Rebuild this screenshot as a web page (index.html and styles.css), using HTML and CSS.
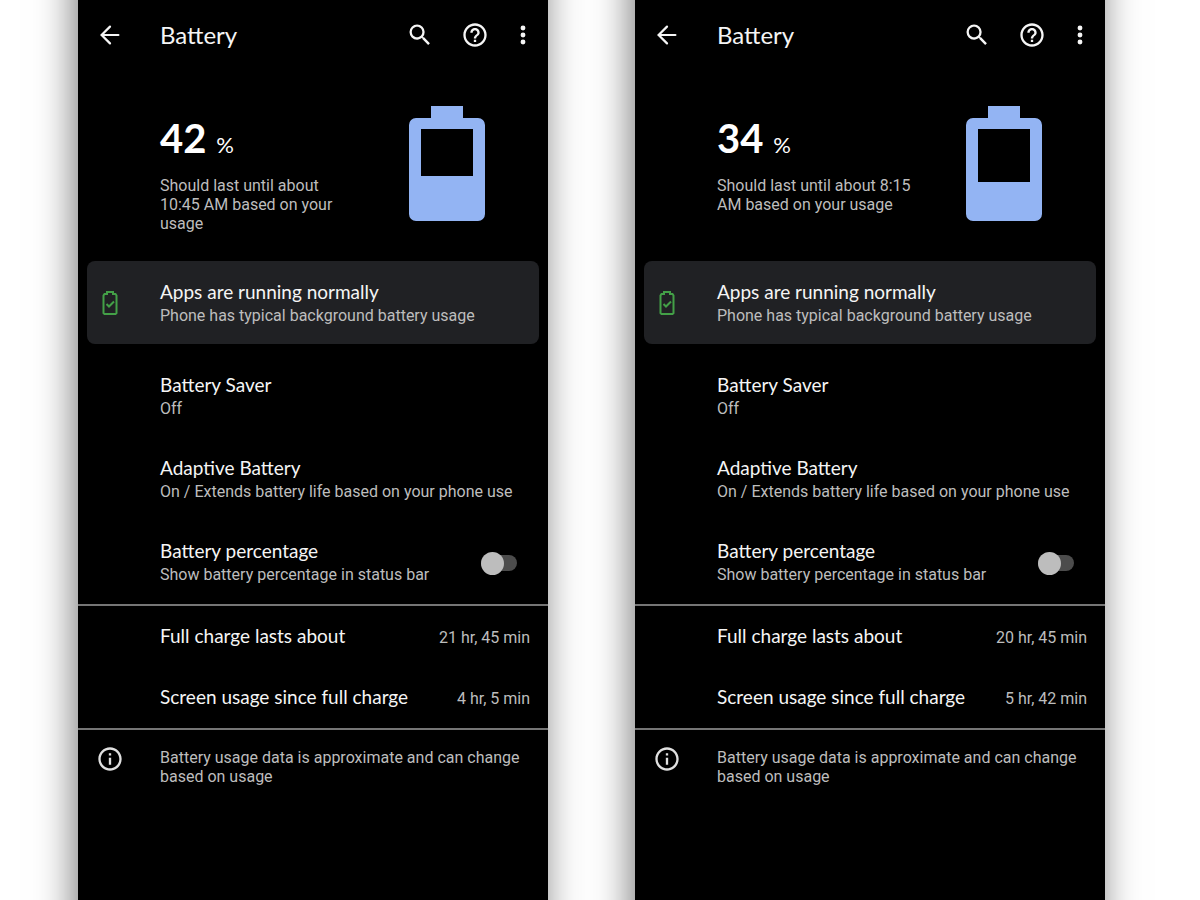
FILE: index.html
```html
<!DOCTYPE html>
<html lang="en">
<head>
<meta charset="utf-8">
<meta name="viewport" content="width=device-width, initial-scale=1">
<title>Battery</title>
<link rel="stylesheet" href="styles.css">
</head>

<body>
<svg class="sprite" aria-hidden="true">
  <symbol id="i-back" viewBox="0 0 24 24"><path d="M19.2 12H5M12 4.8L4.8 12l7.2 7.2" fill="none" stroke="currentColor" stroke-width="1.9" stroke-linecap="round"/></symbol>
  <symbol id="i-search" viewBox="0 0 24 24"><path d="M15.5 14h-.79l-.28-.27A6.47 6.47 0 0 0 16 9.5 6.5 6.5 0 1 0 9.5 16c1.61 0 3.09-.59 4.23-1.57l.27.28v.79l5 4.99L20.49 19l-4.99-5zm-6 0C7.01 14 5 11.99 5 9.5S7.01 5 9.5 5 14 7.01 14 9.5 11.99 14 9.5 14z"/></symbol>
  <symbol id="i-help" viewBox="0 0 24 24"><path d="M11 18h2v-2h-2v2zm1-16C6.48 2 2 6.48 2 12s4.48 10 10 10 10-4.48 10-10S17.52 2 12 2zm0 18c-4.41 0-8-3.59-8-8s3.59-8 8-8 8 3.59 8 8-3.59 8-8 8zm0-14c-2.21 0-4 1.79-4 4h2c0-1.1.9-2 2-2s2 .9 2 2c0 2-3 1.75-3 5h2c0-2.25 3-2.5 3-5 0-2.21-1.79-4-4-4z"/></symbol>
  <symbol id="i-more" viewBox="0 0 24 24"><circle cx="12" cy="6" r="2.1"/><circle cx="12" cy="12" r="2.1"/><circle cx="12" cy="18" r="2.1"/></symbol>
  <symbol id="i-info" viewBox="0 0 24 24"><path d="M11 7h2v2h-2zm0 4h2v6h-2zm1-9C6.48 2 2 6.48 2 12s4.48 10 10 10 10-4.48 10-10S17.52 2 12 2zm0 18c-4.41 0-8-3.59-8-8s3.59-8 8-8 8 3.59 8 8-3.59 8-8 8z"/></symbol>
  <symbol id="i-ok" viewBox="0 0 16 26"><path d="M5 4V2h6v2h2.500L14.500 5.500V23L13.500 24H2.500L1.500 23V5.500L2.500 4zM4.500 14l2.500 2.500 5-5" fill="none" stroke="currentColor" stroke-width="2"/></symbol>
</svg>

<main class="screens">
  <section class="phone">
    <header class="bar">
      <button type="button" class="icon-btn" aria-label="Back"><svg><use href="#i-back"/></svg></button>
      <h1>Battery</h1>
      <button type="button" class="icon-btn" aria-label="Search"><svg><use href="#i-search"/></svg></button>
      <button type="button" class="icon-btn help" aria-label="Help"><svg><use href="#i-help"/></svg></button>
      <button type="button" class="icon-btn" aria-label="More options"><svg><use href="#i-more"/></svg></button>
    </header>

    <div class="level">
      <div class="level-text">
        <p class="percent">42 <small>%</small></p>
        <p class="note">Should last until about 10:45 AM based on your usage</p>
      </div>
      <svg class="cell" viewBox="0 0 76 115"><path fill-rule="evenodd" d="M22 0H54V12H69a7 7 0 0 1 7 7V108a7 7 0 0 1-7 7H7a7 7 0 0 1-7-7V19a7 7 0 0 1 7-7H22zM12 23V70H64V23z"/></svg>
    </div>

    <div class="card">
      <svg class="ok"><use href="#i-ok"/></svg>
      <div>
        <h2>Apps are running normally</h2>
        <p>Phone has typical background battery usage</p>
      </div>
    </div>

    <a class="row" href="#saver">
      <h2>Battery Saver</h2>
      <p>Off</p>
    </a>
    <a class="row" href="#adaptive">
      <h2>Adaptive Battery</h2>
      <p>On / Extends battery life based on your phone use</p>
    </a>
    <div class="row switch-row">
      <label for="pct1">
        <span class="title">Battery percentage</span>
        <span class="sub">Show battery percentage in status bar</span>
      </label>
      <input class="switch" type="checkbox" role="switch" id="pct1">
    </div>

    <dl class="stats">
      <div><dt>Full charge lasts about</dt><dd>21 hr, 45 min</dd></div>
      <div><dt>Screen usage since full charge</dt><dd>4 hr, 5 min</dd></div>
    </dl>

    <footer class="foot">
      <svg><use href="#i-info"/></svg>
      <p>Battery usage data is approximate and can change based on usage</p>
    </footer>
  </section>

  <section class="phone">
    <header class="bar">
      <button type="button" class="icon-btn" aria-label="Back"><svg><use href="#i-back"/></svg></button>
      <h1>Battery</h1>
      <button type="button" class="icon-btn" aria-label="Search"><svg><use href="#i-search"/></svg></button>
      <button type="button" class="icon-btn help" aria-label="Help"><svg><use href="#i-help"/></svg></button>
      <button type="button" class="icon-btn" aria-label="More options"><svg><use href="#i-more"/></svg></button>
    </header>

    <div class="level">
      <div class="level-text">
        <p class="percent">34 <small>%</small></p>
        <p class="note">Should last until about 8:15 AM based on your usage</p>
      </div>
      <svg class="cell" viewBox="0 0 76 115"><path fill-rule="evenodd" d="M22 0H54V12H69a7 7 0 0 1 7 7V108a7 7 0 0 1-7 7H7a7 7 0 0 1-7-7V19a7 7 0 0 1 7-7H22zM12 23V76H64V23z"/></svg>
    </div>

    <div class="card">
      <svg class="ok"><use href="#i-ok"/></svg>
      <div>
        <h2>Apps are running normally</h2>
        <p>Phone has typical background battery usage</p>
      </div>
    </div>

    <a class="row" href="#saver">
      <h2>Battery Saver</h2>
      <p>Off</p>
    </a>
    <a class="row" href="#adaptive">
      <h2>Adaptive Battery</h2>
      <p>On / Extends battery life based on your phone use</p>
    </a>
    <div class="row switch-row">
      <label for="pct2">
        <span class="title">Battery percentage</span>
        <span class="sub">Show battery percentage in status bar</span>
      </label>
      <input class="switch" type="checkbox" role="switch" id="pct2">
    </div>

    <dl class="stats">
      <div><dt>Full charge lasts about</dt><dd>20 hr, 45 min</dd></div>
      <div><dt>Screen usage since full charge</dt><dd>5 hr, 42 min</dd></div>
    </dl>

    <footer class="foot">
      <svg><use href="#i-info"/></svg>
      <p>Battery usage data is approximate and can change based on usage</p>
    </footer>
  </section>
</main>
</body>
</html>
```

FILE: styles.css
```css
* {box-sizing: border-box;}
body {margin: 0; background: #fff; color: #bdbdbd; font: 16px/19px Roboto, sans-serif;}
h1, h2, p, dl, dd {margin: 0;}
svg {display: block; flex: none; fill: currentColor;}
.sprite {position: absolute; width: 0; height: 0;}

.screens {display: grid; grid-template-columns: 1fr 1fr; gap: 87px; min-height: 100vh; padding: 0 95px 0 78px; overflow: hidden;}
/* runs past both ends of the page so the side shadow stays even */
.phone {min-width: 0; margin: -48px 0; padding: 48px 0; background: #000; box-shadow: -4px 0 36px rgba(0,0,0,.52);}

/* top bar */
.bar {display: flex; align-items: center; height: 70px; padding: 0 11px 0 18px; color: #f5f5f5;}
.bar h1 {flex: 1; margin-left: 36px; font: 400 24px/28px Lato, sans-serif;}
.icon-btn {flex: none; padding: 0; border: 0; background: none; color: inherit; cursor: pointer;}
.icon-btn svg {width: 28px; height: 28px;}
.help {margin: 0 20px 0 27px;}

/* charge level */
.level {display: flex; justify-content: space-between; align-items: flex-start; min-height: 191px; padding: 36px 63px 0 82px;}
.level-text {flex: 0 1 200px; padding-top: 8px;}
.percent {margin-bottom: 7px; color: #fff; font: 700 40px/48px Lato, sans-serif;}
.percent small {font-size: 22px; font-weight: 400;}
.cell {width: 76px; height: 115px; fill: #93b4f3;}

h2, .title, dt {color: #f5f5f5; font: 400 19px/24px Lato, sans-serif;}
h2 + p, .sub {line-height: 24px;}

.card {display: flex; align-items: center; margin: 0 9px 11px; padding: 19px 15px 16px; border-radius: 8px; background: #202124;}
.card .ok {width: 16px; height: 26px; margin: 0 42px 2px 0; color: #43a047;}

.row {display: block; padding: 18px 18px 17px 82px; color: inherit; text-decoration: none;}
.switch-row {display: flex; align-items: center; justify-content: space-between; padding-right: 31px;}
.title, .sub {display: block;}

.switch {appearance: none; display: flex; align-items: center; width: 36px; height: 16px; margin: 0; border-radius: 8px; background: #4c4c4c; cursor: pointer;}
.switch::before {content: ""; width: 23px; height: 23px; border-radius: 50%; background: #bdbdbd;}
.switch:checked {justify-content: flex-end;}

.stats {border: solid #757575; border-width: 2px 0;}
.stats div {display: flex; align-items: baseline; justify-content: space-between; padding: 18px 18px 19px 82px;}

.foot {display: flex; align-items: flex-start; padding: 15px 18px;}
.foot svg {width: 28px; height: 28px; margin-right: 36px; color: #e0e0e0;}
.foot p {padding-top: 3px;}
```
